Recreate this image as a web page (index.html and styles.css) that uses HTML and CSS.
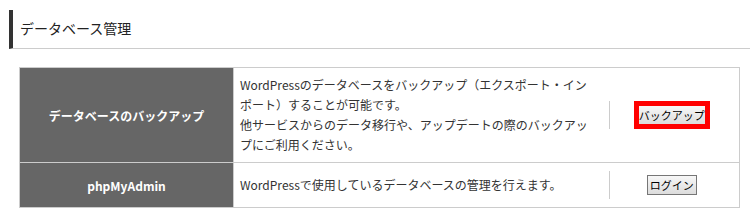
FILE: index.html
```html
<!DOCTYPE html>
<html lang="ja">
<head>
    <meta charset="UTF-8">
    <meta name="viewport" content="width=device-width, initial-scale=1.0">
    <title>データベース管理</title>
    <link rel="stylesheet" href="styles.css">
</head>
<body>
    <div class="section">
        <h2 class="section-title">データベース管理</h2>

        <table class="db-table">
            <colgroup>
                <col class="col-head">
                <col class="col-desc">
                <col class="col-action">
            </colgroup>
            <tr class="row-tall">
                <th>データベースのバックアップ</th>
                <td class="desc">WordPressのデータベースをバックアップ（エクスポート・インポート）することが可能です。<br>他サービスからのデータ移行や、アップデートの際のバックアップにご利用ください。</td>
                <td class="action">
                    <div class="action-inner">
                        <button class="btn btn-alert">バックアップ</button>
                    </div>
                </td>
            </tr>
            <tr class="row-short">
                <th>phpMyAdmin</th>
                <td class="desc">WordPressで使用しているデータベースの管理を行えます。</td>
                <td class="action">
                    <div class="action-inner">
                        <button class="btn">ログイン</button>
                    </div>
                </td>
            </tr>
        </table>
    </div>
</body>
</html>
```

FILE: styles.css
```css
* {
    margin: 0;
    padding: 0;
    box-sizing: border-box;
}

body {
    font-family: "Noto Sans CJK JP", "Noto Sans", sans-serif;
    background: #fff;
    color: #333;
}

.section {
    padding: 10px 0 0 9px;
}

.section-title {
    height: 39px;
    line-height: 37px;
    padding-left: 7px;
    border-left: 4px solid #333;
    border-bottom: 1px solid #ccc;
    font-size: 14px;
    font-weight: normal;
    color: #222;
}

.db-table {
    width: 720px;
    margin: 18px 0 0 10px;
    border-collapse: collapse;
    table-layout: fixed;
    font-size: 12px;
}

.col-head {
    width: 214px;
}

.col-desc {
    width: 375px;
}

.col-action {
    width: 131px;
}

.db-table th,
.db-table td {
    border-top: 1px solid #ccc;
    border-bottom: 1px solid #ccc;
    vertical-align: middle;
}

.db-table th {
    background: #666;
    color: #fff;
    font-weight: bold;
    text-align: center;
    border-left: 1px solid #ccc;
    border-right: 1px solid #ccc;
}

.row-tall th,
.row-tall td {
    height: 95px;
}

.row-short th,
.row-short td {
    height: 45px;
}

.desc {
    padding: 0 14px 0 6px;
    line-height: 20px;
    color: #333;
}

.action {
    border-right: 1px solid #ccc;
}

.action-inner {
    display: flex;
    align-items: center;
    justify-content: center;
    height: 28px;
    padding-right: 5px;
    border-left: 1px solid #ccc;
}

.btn {
    height: 20px;
    padding: 0 2px;
    border: 1px solid #767676;
    background: linear-gradient(#f7f7f7, #dcdcdc);
    font-family: inherit;
    font-size: 11px;
    line-height: 18px;
    color: #000;
}

.btn-alert {
    height: 28px;
    padding: 0;
    border: 5px solid #f00;
}
```
